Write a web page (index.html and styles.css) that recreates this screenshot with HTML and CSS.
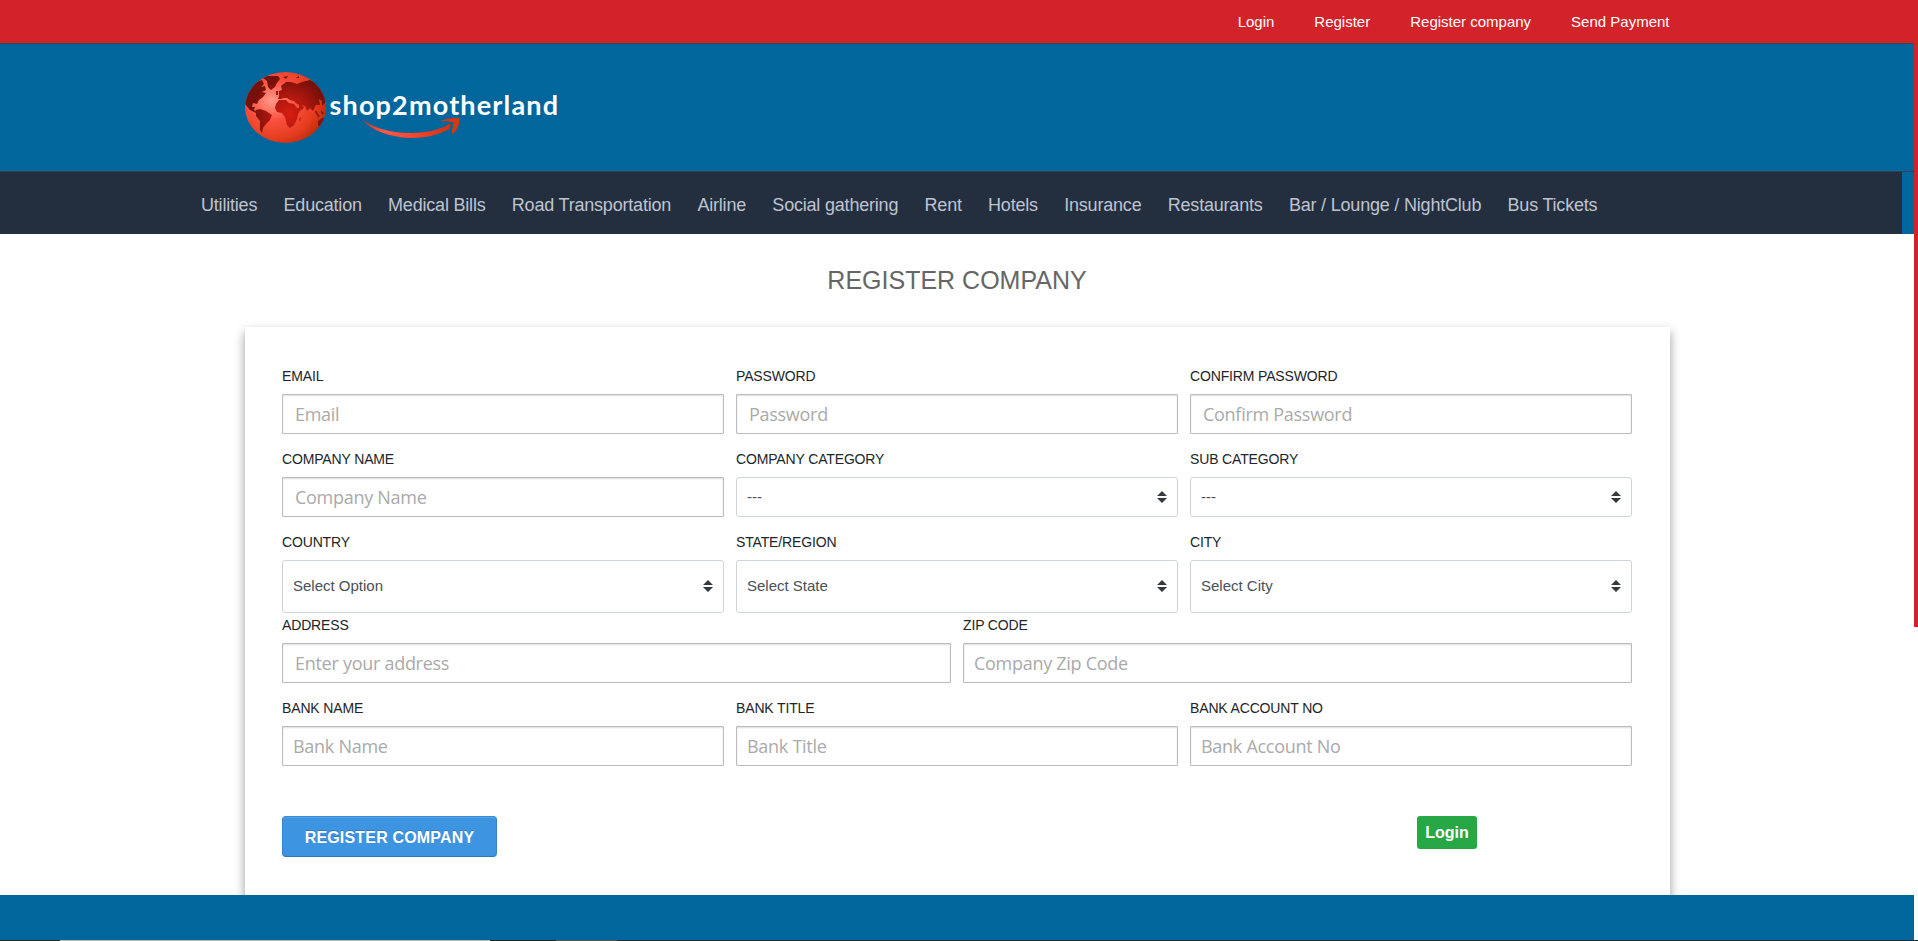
FILE: index.html
```html
<!DOCTYPE html>
<html lang="en">
<head>
<meta charset="utf-8">
<title>Register Company</title>
<link rel="stylesheet" href="styles.css">
</head>
<body>
<div class="page">
  <div class="topbar">
    <nav class="toplinks"><a>Login</a><a>Register</a><a>Register company</a><a>Send Payment</a></nav>
  </div>
  <header class="header">
    <svg class="logo" width="320" height="80" viewBox="0 0 320 80">
      <defs>
        <radialGradient id="sea" cx=".33" cy=".4" r=".72">
          <stop offset="0" stop-color="#ff9a8c"/><stop offset=".4" stop-color="#f9503f"/><stop offset=".75" stop-color="#e63d20"/><stop offset="1" stop-color="#bd2a06"/>
        </radialGradient>
        <radialGradient id="land" gradientUnits="userSpaceOnUse" cx="44" cy="44" r="38">
          <stop offset="0" stop-color="#d81d12"/><stop offset=".6" stop-color="#a3160d"/><stop offset="1" stop-color="#75100a"/>
        </radialGradient>
        <linearGradient id="arc" x1="0" x2="1" y1="0" y2="0">
          <stop offset="0" stop-color="#c93418"/><stop offset=".25" stop-color="#ff5a48"/><stop offset=".7" stop-color="#ee4023"/><stop offset="1" stop-color="#cf330c"/>
        </linearGradient>
        <clipPath id="disc"><ellipse cx="40.5" cy="37.5" rx="40.5" ry="35.5"/></clipPath>
      </defs>
      <ellipse cx="40.5" cy="37.5" rx="40.5" ry="35.5" fill="url(#sea)"/>
      <g fill="url(#land)" clip-path="url(#disc)">
        <path d="M0 28 5 17 11 12 17 10 19 14 16 17 20 16 21 20 17 22 21 23 18 27 14 30 12 34 8 33 7 37 10 37 9 40 13 42 11 43 5 40 0 34Z"/>
        <path d="M18 8 22 6 33 6 35 9 32 13 30 17 26 20 23 17 22 11Z"/>
        <path d="M11 40 15 39 21 41 27 45 25 50 21 54 18 58 17 63 15 60 15 51 11 46Z"/>
        <path d="M34 26 34 21 37 20 36 16 41 12 46 12 52 14 57 12 65 10 74 14 80 26 80 33 77 36 77 31 74 29 75 35 71 35 68 41 65 38 62 41 60 36 56 35 52 34 49 31 45 30 42 28 39 28 36 29 33 29Z"/>
        <path d="M31 34 34 30 41 30 44 33 49 34 52 38 57 38 53 44 52 49 49 55 45 58 42 55 40 47 37 43 32 42 30 38Z"/>
        <path d="M54 33 59 37 57 40 54 38Z"/>
        <path d="M71 40 73 44 75 46 73 47 70 42ZM76 40 79 43 77 45ZM73 51 77 48 82 48 79 55 75 57 73 55ZM54 49 56 47 55 52ZM31 21 33 21 33 25 31 25ZM38 7 43 6 41 9ZM51 8 54 6 54 8Z"/>
      </g>
      <text class="logo-text" x="84.500" y="44.500" textLength="228.500" lengthAdjust="spacing">shop2motherland</text>
      <path fill="url(#arc)" d="M117 49.500C130 59 148 63 166 63C180 63 194 60 203 55L202 53.500 206 54.500 205 58.500C194 65 181 68 165 68C145 67 127 61 117 49.500Z"/>
      <path fill="#d8360f" d="M195 51C201 48.500 209 47.500 214.500 48.500C215 54 212 60 209 63L206.500 64C206.500 60 208.500 57 208.500 52.500C204 51 200 51 195 51Z"/>
    </svg>
  </header>
  <nav class="menu">
    <a>Utilities</a><a>Education</a><a>Medical Bills</a><a>Road Transportation</a><a>Airline</a><a>Social gathering</a><a>Rent</a><a>Hotels</a><a>Insurance</a><a>Restaurants</a><a>Bar / Lounge / NightClub</a><a>Bus Tickets</a>
  </nav>
  <main class="main">
    <h1 class="title">REGISTER COMPANY</h1>
    <form class="card">
      <div class="row">
        <label class="field">EMAIL<input class="input" placeholder="Email"></label>
        <label class="field">PASSWORD<input class="input" placeholder="Password"></label>
        <label class="field">CONFIRM PASSWORD<input class="input" placeholder="Confirm Password"></label>
      </div>
      <div class="row">
        <label class="field">COMPANY NAME<input class="input" placeholder="Company Name"></label>
        <div class="field">COMPANY CATEGORY<div class="select">---<svg class="arrows" width="10" height="12" viewBox="0 0 10 12"><path d="M0 5 5 0 10 5ZM0 7H10L5 12Z"/></svg></div></div>
        <div class="field">SUB CATEGORY<div class="select">---<svg class="arrows" width="10" height="12" viewBox="0 0 10 12"><path d="M0 5 5 0 10 5ZM0 7H10L5 12Z"/></svg></div></div>
      </div>
      <div class="row">
        <div class="field">COUNTRY<div class="select tall">Select Option<svg class="arrows" width="10" height="12" viewBox="0 0 10 12"><path d="M0 5 5 0 10 5ZM0 7H10L5 12Z"/></svg></div></div>
        <div class="field">STATE/REGION<div class="select tall">Select State<svg class="arrows" width="10" height="12" viewBox="0 0 10 12"><path d="M0 5 5 0 10 5ZM0 7H10L5 12Z"/></svg></div></div>
        <div class="field">CITY<div class="select tall">Select City<svg class="arrows" width="10" height="12" viewBox="0 0 10 12"><path d="M0 5 5 0 10 5ZM0 7H10L5 12Z"/></svg></div></div>
      </div>
      <div class="row">
        <label class="field">ADDRESS<input class="input" placeholder="Enter your address"></label>
        <label class="field">ZIP CODE<input class="input slim" placeholder="Company Zip Code"></label>
      </div>
      <div class="row">
        <label class="field">BANK NAME<input class="input slim" placeholder="Bank Name"></label>
        <label class="field">BANK TITLE<input class="input slim" placeholder="Bank Title"></label>
        <label class="field">BANK ACCOUNT NO<input class="input slim" placeholder="Bank Account No"></label>
      </div>
      <div class="actions">
        <button type="button" class="submit">REGISTER COMPANY</button>
        <a class="login">Login</a>
      </div>
    </form>
  </main>
  <footer class="footer"></footer>
</div>
<div class="scroll"><div class="scroll-thumb"></div></div>
<div class="edge"></div>
</body>
</html>
```
FILE: styles.css
```css
* { box-sizing: border-box; }
body {
  margin: 0;
  height: 941px;
  overflow: hidden;
  display: grid;
  grid-template-columns: 1914px 4px;
  grid-template-rows: 940px 1px;
  background: #fff;
  font-family: "Liberation Sans", Arial, sans-serif;
  color: #212529;
}
.page { display: flex; flex-direction: column; }
.topbar {
  height: 44px;
  background: #d2232a;
  border-bottom: 1px solid #3b4653;
  padding-right: 244.5px;
}
.toplinks {
  display: flex;
  justify-content: flex-end;
  gap: 40px;
  font-size: 15px;
  line-height: 43px;
  color: #fff;
}
.header {
  height: 128px;
  background: #00669c;
  border-bottom: 1px solid #2b4358;
  padding: 26px 0 0 245px;
}
.logo { display: block; }
.logo-text { font-family: Lato, sans-serif; font-weight: 700; font-size: 27px; fill: #fff; }
.menu {
  height: 62px;
  display: flex;
  gap: 26.3px;
  padding-left: 201px;
  background: #232f3e;
  border-right: 12px solid #00669c;
  color: #bfc3d0;
  font-size: 18px;
  line-height: 67px;
  letter-spacing: -0.2px;
  white-space: nowrap;
}
.main { height: 661px; overflow: hidden; }
.title {
  margin: 0;
  height: 93px;
  padding-top: 31px;
  font-size: 25px;
  line-height: 30px;
  font-weight: 400;
  text-align: center;
  color: #666;
}
.card {
  margin: 0 244px 0 245px;
  height: 600px;
  padding: 40px 38px 0 37px;
  background: #fff;
  box-shadow: 0 5px 10px rgba(0, 0, 0, .4);
}
.row { display: flex; gap: 12px; height: 83px; }
.field {
  flex: 1;
  display: flex;
  flex-direction: column;
  font-size: 14px;
  line-height: 18px;
  letter-spacing: -0.15px;
}
.input {
  margin-top: 9px;
  height: 40px;
  width: 100%;
  flex: none;
  padding: 0 12px 1px;
  border: 1px solid #bbb;
  border-radius: 1px;
  box-shadow: inset 0 1px 2px #ddd;
  font: 18px "Open Sans", sans-serif;
  letter-spacing: -0.28px;
}
.slim { padding: 0 10px 1px; }
.input::placeholder { color: #aaa; opacity: 1; }
.select {
  margin-top: 9px;
  flex: none;
  height: 40px;
  border: 1px solid #ced4da;
  border-radius: 3px;
  padding: 0 10px;
  display: flex;
  align-items: center;
  justify-content: space-between;
  font-size: 15px;
  letter-spacing: 0;
  color: #495057;
}
.tall { height: 53px; padding-bottom: 1px; }
.arrows { fill: #343a40; }
.actions {
  display: flex;
  justify-content: space-between;
  align-items: flex-start;
  padding: 34px 155px 0 0;
}
.submit {
  width: 215px;
  height: 41px;
  padding: 2px 0 0;
  border: 1px solid #3079c0;
  border-color: #3b8bd6 #3884cb #3079b8;
  border-radius: 4px;
  background: #3d94e0;
  box-shadow: inset 0 1px 0 #54a3e8;
  color: #fff;
  font: bold 16px "Liberation Sans", Arial, sans-serif;
  letter-spacing: 0.18px;
  text-shadow: 0 -1px 0 #2d7cc4;
}
.login {
  width: 60px;
  height: 33px;
  border-radius: 3px;
  background: #28a745;
  color: #fff;
  font-size: 16px;
  font-weight: 700;
  line-height: 33px;
  text-align: center;
}
.footer { height: 45px; background: #00669c; }
.scroll-thumb { height: 627px; background: #d2232a; }
.edge {
  grid-column: 1 / 3;
  background: linear-gradient(90deg, #232b23 0 60px, #b4b8ac 60px 490px, #1c2422 490px 556px, #4e5553 556px 617px, #1e2a36 617px);
}
```
